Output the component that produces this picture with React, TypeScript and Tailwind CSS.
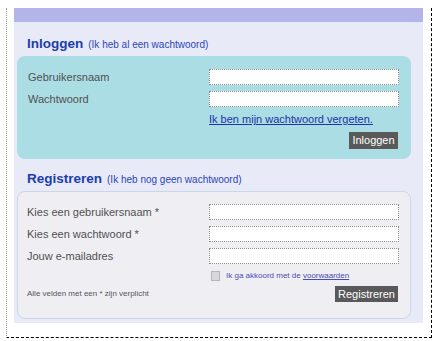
export default function App() {
  const font = { fontFamily: '"Liberation Sans", Arial, sans-serif' };

  return (
    <div className="w-[438px] h-[341px] bg-white overflow-hidden" style={font}>
      <div className="ml-[6px] mt-[4px] w-[426px] h-[330px] border-l border-l-[#9a9a9a] border-r border-r-black border-b border-b-black border-dashed [border-left-style:dotted]">
        <div className="ml-[7px] mt-[8px] w-[409px] h-[315px] bg-[#e9eaf8]">
          <div className="h-[14px] bg-[#b3b5ea]" />

          {/* inloggen */}
          <div className="h-[34px] pt-[12px] pl-[13px] leading-[17px] whitespace-nowrap">
            <span className="text-[13.5px] font-bold text-[#1b3eab]">Inloggen</span>
            <span className="ml-[5px] text-[10px] text-[#2a45b8]">(Ik heb al een wachtwoord)</span>
          </div>

          <div className="ml-[3px] w-[394px] h-[103px] rounded-[8px] bg-[#abdde5] pt-[13px] pl-[11px] pr-[12px]">
            <div className="flex items-center h-[16px]">
              <span className="w-[181px] text-[11px] text-[#505050]">Gebruikersnaam</span>
              <div className="w-[190px] h-[16px] bg-white border border-dotted border-[#8c8c8c]" />
            </div>
            <div className="flex items-center h-[16px] mt-[6px]">
              <span className="w-[181px] text-[11px] text-[#505050]">Wachtwoord</span>
              <div className="w-[190px] h-[16px] bg-white border border-dotted border-[#8c8c8c]" />
            </div>
            <div className="pl-[181px] mt-[4px] leading-[13px]">
              <span className="text-[11px] text-[#2432a6] underline whitespace-nowrap">Ik ben mijn wachtwoord vergeten.</span>
            </div>
            <div className="flex justify-end mt-[6px] pr-[1px]">
              <div className="h-[17px] w-[49px] bg-[#595959] text-white text-[11px] leading-[17px] text-center">Inloggen</div>
            </div>
          </div>

          {/* registreren */}
          <div className="h-[32px] pt-[11px] pl-[13px] leading-[16px] whitespace-nowrap">
            <span className="text-[13.5px] font-bold text-[#1b3eab]">Registreren</span>
            <span className="ml-[5px] text-[10px] text-[#2a45b8]">(Ik heb nog geen wachtwoord)</span>
          </div>

          <div className="ml-[3px] w-[394px] h-[128px] rounded-[8px] bg-[#efeff3] border border-[#c9d7e6] pt-[12px] pl-[9px] pr-[11px]">
            <div className="flex items-center h-[16px]">
              <span className="w-[182px] text-[11px] text-[#505050]">Kies een gebruikersnaam *</span>
              <div className="w-[190px] h-[16px] bg-white border border-dotted border-[#8c8c8c]" />
            </div>
            <div className="flex items-center h-[16px] mt-[6px]">
              <span className="w-[182px] text-[11px] text-[#505050]">Kies een wachtwoord *</span>
              <div className="w-[190px] h-[16px] bg-white border border-dotted border-[#8c8c8c]" />
            </div>
            <div className="flex items-center h-[16px] mt-[6px]">
              <span className="w-[182px] text-[11px] text-[#505050]">Jouw e-mailadres</span>
              <div className="w-[190px] h-[16px] bg-white border border-dotted border-[#8c8c8c]" />
            </div>
            <div className="flex items-center h-[11px] mt-[6px] pl-[184px]">
              <div className="w-[9px] h-[10px] bg-[#d8d8dc] border border-[#b4b4bc]" />
              <span className="ml-[6px] text-[8px] text-[#4a4ab4] whitespace-nowrap">
                Ik ga akkoord met de <span className="underline">voorwaarden</span>
              </span>
            </div>
            <div className="flex items-center justify-between mt-[5px] pr-[1px]">
              <span className="text-[8px] text-[#555] whitespace-nowrap">Alle velden met een * zijn verplicht</span>
              <div className="h-[16px] w-[63px] bg-[#595959] text-white text-[11px] leading-[16px] text-center">Registreren</div>
            </div>
          </div>
        </div>
      </div>
    </div>
  );
}
